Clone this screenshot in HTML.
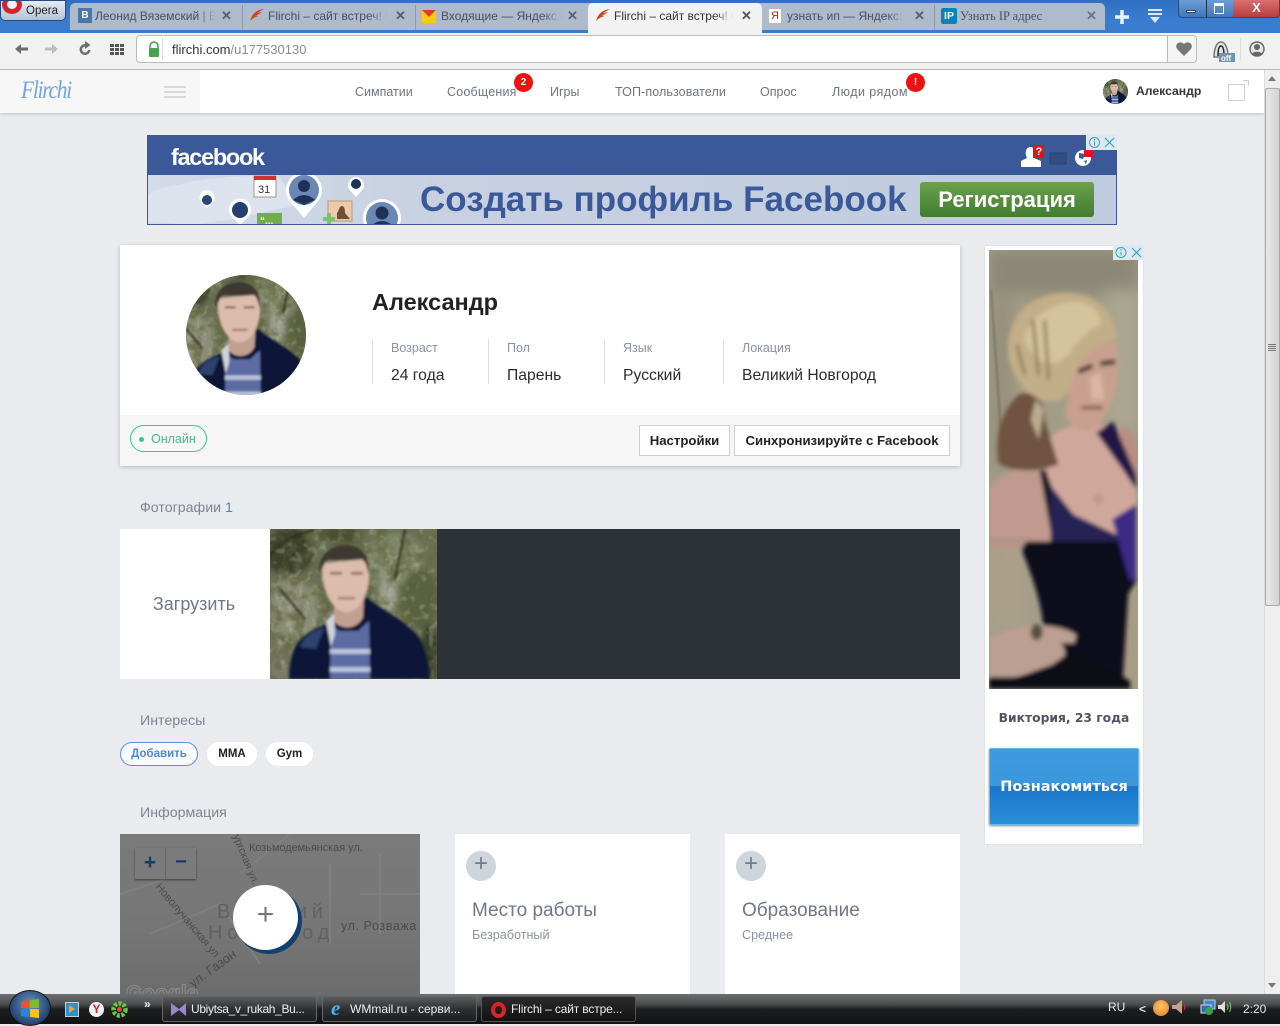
<!DOCTYPE html>
<html lang="ru"><head><meta charset="utf-8"><title>Flirchi</title>
<style>
*{box-sizing:border-box}
html,body{margin:0;padding:0;width:1280px;height:1024px;overflow:hidden;background:#e9ebee;font-family:"Liberation Sans","Noto Sans CJK SC",sans-serif}
.a{position:absolute;white-space:nowrap}
.tt{position:absolute;top:8px;height:16px;font-size:12px;line-height:16px;color:#46505e;white-space:nowrap;overflow:hidden;-webkit-mask-image:linear-gradient(90deg,#000 82%,transparent 98%)}
.tx{position:absolute;top:7px;font-size:13px;font-weight:bold;line-height:18px;color:#56616f}
.nav{position:absolute;top:85px;font-size:12.5px;line-height:15px;color:#6d7582;white-space:nowrap}
.badge{position:absolute;width:19px;height:19px;border-radius:50%;background:#ee1111;color:#fff;font-size:10px;font-weight:bold;text-align:center;line-height:19px}
.lbl{position:absolute;top:340px;font-size:12.5px;line-height:15px;color:#8a93a3;white-space:nowrap;transform:translateY(1px)}
.val{position:absolute;top:367px;font-size:15.7px;line-height:18px;color:#2a2c30;white-space:nowrap}
.sep{position:absolute;top:339px;width:1px;height:45px;background:#ddd}
.btn{position:absolute;top:425px;height:31px;background:#fff;border:1px solid #cfcfcf;font-size:13.2px;font-weight:bold;color:#222;text-align:center;line-height:30px;white-space:nowrap}
.h{position:absolute;left:140px;font-size:14.2px;line-height:16px;color:#7d8593;white-space:nowrap}
.pill{position:absolute;top:742px;height:24px;border-radius:12px;background:#fff;font-size:11.5px;font-weight:bold;text-align:center;line-height:25px;color:#222}
.card{position:absolute;top:834px;height:160px;background:#fff}
.plus{position:absolute;width:30px;height:30px;border-radius:50%;background:#cfd5dd;color:#737c8a;text-align:center;font-size:24px;line-height:26px;left:11px;top:17px}
.ct{position:absolute;top:66px;font-size:19px;line-height:22px;color:#6f7888;white-space:nowrap}
.cs{position:absolute;top:94px;font-size:12.6px;line-height:15px;color:#8a93a3;white-space:nowrap}
.tb{position:absolute;top:996px;height:26px;border:1px solid #666;border-radius:3px;background:linear-gradient(#5a5c5e,#2e3032 50%,#1c1e20);color:#eee;font-size:12px;line-height:24px;white-space:nowrap;overflow:hidden}
</style></head><body>

<svg width="0" height="0" style="position:absolute"><defs>
<filter id="b1"><feGaussianBlur stdDeviation="1.200"/></filter>
<filter id="b2"><feGaussianBlur stdDeviation="2.200"/></filter>
<filter id="b3"><feGaussianBlur stdDeviation="3"/></filter>
<filter id="b5"><feGaussianBlur stdDeviation="7"/></filter>
<filter id="leaf" x="0" y="0" width="100%" height="100%"><feTurbulence type="fractalNoise" baseFrequency=".085" numOctaves="3" seed="4"/><feColorMatrix values="0 0 0 0 .12  0 0 0 0 .13  0 0 0 0 .05  3 0 0 0 -1.2"/></filter>
<filter id="leaf2" x="0" y="0" width="100%" height="100%"><feTurbulence type="fractalNoise" baseFrequency=".12" numOctaves="2" seed="9"/><feColorMatrix values="0 0 0 0 .8  0 0 0 0 .82  0 0 0 0 .72  3 0 0 0 -1.6"/></filter>
<symbol id="man" viewBox="0 0 167 150" preserveAspectRatio="xMidYMid slice">
<rect width="167" height="150" fill="#6a7053"/>
<g filter="url(#b3)">
<ellipse cx="18" cy="22" rx="26" ry="24" fill="#3c4129"/>
<ellipse cx="25" cy="80" rx="26" ry="30" fill="#8b8e77"/>
<ellipse cx="125" cy="30" rx="30" ry="26" fill="#7f8666"/>
<ellipse cx="150" cy="70" rx="18" ry="30" fill="#59613f"/>
<ellipse cx="118" cy="65" rx="10" ry="18" fill="#9a9e8b"/>
<ellipse cx="70" cy="6" rx="22" ry="9" fill="#4a5030"/>
<ellipse cx="10" cy="130" rx="16" ry="22" fill="#7c7a66"/>
<ellipse cx="160" cy="125" rx="10" ry="30" fill="#39402a"/>
</g>
<rect width="167" height="150" filter="url(#leaf)" opacity=".7"/>
<rect width="167" height="150" filter="url(#leaf2)" opacity=".3"/>
<path d="M0 25C20 5 35 5 45 0M10 60L35 90M135 0L125 50" stroke="#2e2a1e" stroke-width="2" fill="none" filter="url(#b1)"/>
<g filter="url(#b1)">
<path d="M19 150 C20 118 28 105 60 94 L76 84 L97 68 C105 78 140 92 152 113 C158 130 160 140 160 150Z" fill="#0d1739"/>
<path d="M60 150 L61 96 L70 102 L88 102 L99 92 L100 150Z" fill="#5b6ca3"/>
<path d="M60 120 H100 V125 H60ZM60 138 H100 V143 H60Z" fill="#b9c3dc"/>
<path d="M56 92 L64 84 L65 105 L61 118Z" fill="#cfd4dc"/>
<path d="M30 118 C34 108 42 102 54 99 L46 120Z" fill="#2f4270"/>
<path d="M64 70 L64 92 C72 102 88 100 93 88 L94 66Z" fill="#c2a090"/>
<path d="M52 34 C51 60 60 79 74 83 C85 85 95 72 98 58 C100 48 100 38 98 30Z" fill="#dcbcac"/>
<path d="M50 46 C47 26 60 16 76 16 C92 16 101 28 99 46 C97 38 96 32 91 30 C80 32 66 31 58 30 C54 34 52 40 50 46Z" fill="#3c3733"/>
<path d="M60 43 H72 V45.500 H60ZM81 43 H93 V45.500 H81Z" fill="#86655a"/>
<path d="M68 68 H85 V70.500 H68Z" fill="#a8766e"/>
</g>
</symbol>
<symbol id="woman" viewBox="0 0 150 440" preserveAspectRatio="none">
<rect width="150" height="440" fill="#a39d88"/>
<g filter="url(#b5)">
<rect x="0" y="0" width="150" height="45" fill="#8d8876"/>
<rect x="118" y="40" width="32" height="140" fill="#aba691"/>
<rect x="0" y="50" width="25" height="170" fill="#97917c"/>
<rect x="0" y="290" width="35" height="90" fill="#aaa08a"/>
<rect x="130" y="330" width="20" height="110" fill="#a89d84"/>
</g>
<path d="M2 40 L14 210" stroke="#5c5748" stroke-width="1" filter="url(#b1)"/>
<g filter="url(#b2)">
<path d="M134 175 C145 180 150 195 150 215 V230 L128 200Z" fill="#b98f83"/>
<path d="M60 190 C80 170 110 172 125 180 L148 230 V290 L100 290 L55 230Z" fill="#d0a89b"/>
<path d="M0 240 C15 218 42 215 60 228 L80 290 L80 300 H0Z" fill="#c09a8e"/>
<path d="M10 214 C5 190 12 160 30 145 C42 140 58 150 56 170 L70 215 C50 222 28 224 10 214Z" fill="#6f523f"/>
<path d="M42 170 L47 150 L55 160 L50 190Z" fill="#b9ae92"/>
<path d="M20 110 C14 70 40 42 80 43 C110 44 128 65 128 88 L112 95 C100 115 92 135 72 150 C60 155 32 150 20 110Z" fill="#c2ae88"/>
<path d="M35 90 C40 70 60 52 90 52 C105 55 115 65 112 75 C100 80 90 90 80 105 C65 118 50 120 35 90Z" fill="#d5c39c"/>
<path d="M28 95 L36 125 M44 70 L50 125 M56 70 L60 130" stroke="#8d7a58" stroke-width="3" fill="none"/>
<path d="M82 138 C88 108 105 92 128 92 C134 120 128 155 108 178 C98 186 84 180 76 165Z" fill="#c9a08f"/>
<path d="M90 122 L104 116 M112 114 L127 112" stroke="#42342f" stroke-width="5"/>
<path d="M93 158 H114" stroke="#6d4640" stroke-width="3"/>
<path d="M102 128 L112 122 L116 150 L103 150Z" fill="#dbb5a5"/>
<path d="M108 183 L125 172 L148 225 V240 L136 222Z" fill="#221945"/>
<path d="M51 222 L57 220 L82 290 L64 292Z" fill="#1c1626"/>
<path d="M62 236 L85 265 L134 288 L148 265 V300 H62Z" fill="#272054"/>
<path d="M30 292 L148 292 V332 L140 345 L134 440 H40 L55 380 C52 345 40 320 30 292Z" fill="#100a1c"/>
<path d="M124 270 L148 255 V330 L142 332Z" fill="#3c2c86"/>
<path d="M0 288 H40 L34 298 H0Z" fill="#b4948a"/>
<path d="M0 388 C15 382 28 378 42 376 C58 376 78 378 88 386 L86 394 L72 394 C78 400 78 408 72 412 C58 418 40 424 24 428 H0Z" fill="#bc9f93"/>
<ellipse cx="48" cy="383" rx="6" ry="8" fill="#55503f"/>
<path d="M0 428 H28 L60 418 L86 400 L142 432 V440 H0Z" fill="#0f0a16"/>
<circle cx="110" cy="250" r="3.500" fill="none" stroke="#7d7468"/>
</g>
</symbol>
</defs></svg>

<!-- page header -->
<div class="a" style="left:0;top:70px;width:1264px;height:43px;background:#fff;box-shadow:0 1px 3px rgba(0,0,0,.18)"></div>
<div class="a" style="left:0;top:70px;width:200px;height:43px;background:#f7f7f7"></div>
<div class="a" style="left:21px;top:78px;font-family:'Liberation Serif',serif;font-style:italic;font-size:25px;line-height:26px;letter-spacing:-1.500px;color:#76a3e2;transform:scaleX(.86);transform-origin:0 0">Flirchi</div>
<div class="a" style="left:164px;top:86px;width:22px;height:2px;background:#d8d8d8"></div>
<div class="a" style="left:164px;top:91px;width:22px;height:2px;background:#d8d8d8"></div>
<div class="a" style="left:164px;top:96px;width:22px;height:2px;background:#d8d8d8"></div>
<div class="nav" style="left:355px">Симпатии</div>
<div class="nav" style="left:447px;letter-spacing:.2px">Сообщения</div>
<div class="badge" style="left:514px;top:73px">2</div>
<div class="nav" style="left:550px">Игры</div>
<div class="nav" style="left:615px;letter-spacing:.1px">ТОП-пользователи</div>
<div class="nav" style="left:760px">Опрос</div>
<div class="nav" style="left:832px;letter-spacing:.45px">Люди рядом</div>
<div class="badge" style="left:906px;top:73px">!</div>
<svg class="a" style="left:1103px;top:79px;border-radius:50%" width="25" height="25"><use href="#man" width="25" height="25"/></svg>
<div class="a" style="left:1136px;top:84px;font-size:12.200px;font-weight:bold;line-height:15px;color:#33363b">Александр</div>
<svg class="a" style="left:1228px;top:80px" width="22" height="21" fill="none" stroke="#d0d0d0"><path d="M.5 4.500H16.500V20.500H.5ZM15 .5H20.500V6"/></svg>

<!-- fb banner -->
<div class="a" style="left:147px;top:135px;width:970px;height:90px;border:1px solid #3b5998;border-top:0;background:linear-gradient(90deg,#d3dbe8,#c8d1e2 30%,#bfcbdf);overflow:hidden">
<div class="a" style="left:-1px;top:0;width:970px;height:40px;background:#3b5998"></div>
<div class="a" style="left:23px;top:8px;font-size:23.500px;font-weight:bold;line-height:28px;letter-spacing:-1.300px;color:#fff">facebook</div>
<div class="a" style="left:272px;top:45px;font-size:35px;font-weight:bold;line-height:40px;color:#3b5998">Создать профиль Facebook</div>
<div class="a" style="left:772px;top:47px;width:174px;height:35px;border-radius:3px;background:linear-gradient(#6da14d,#3f7e2f);color:#fff;font-size:22px;font-weight:bold;line-height:35px;text-align:center">Регистрация</div>
<svg class="a" style="left:0;top:40px" width="270" height="50">
<path d="M0 20C12 10 30 12 45 6 L80 2 L130 0 L150 30 L80 45 L40 50 L0 46Z" fill="#dde3ed"/>
<path d="M59 33L54 28A7.500 7.500 0 1 1 64 28Z" fill="#fff"/><circle cx="59" cy="25" r="5" fill="#2b4677"/>
<path d="M92 50L84 42A11 11 0 1 1 100 42Z" fill="#fff"/><circle cx="92" cy="35" r="8" fill="#24406f"/>
<rect x="106" y="1" width="22" height="21" fill="#fff" stroke="#998"/><rect x="106" y="1" width="22" height="4" fill="#c33"/><text x="110" y="18" font-size="11" font-family="Liberation Sans" fill="#333">31</text>
<path d="M156 43L141 25A18 18 0 1 1 171 25Z" fill="#fff"/><circle cx="156" cy="15" r="15" fill="#6a87b6"/><circle cx="156" cy="11" r="6" fill="#1f3158"/><path d="M145 25Q156 15 167 25L156 30Z" fill="#1f3158"/>
<path d="M208 22L201 14A8 8 0 1 1 215 14Z" fill="#fff"/><circle cx="208" cy="9" r="5" fill="#1f3158"/>
<rect x="180" y="26" width="24" height="20" fill="#f0c9a8" stroke="#b59b77"/><path d="M189 44V38C191 36 191 31 194 31S197 36 197 38L202 44Z" fill="#6b5236"/>
<circle cx="234" cy="43" r="19" fill="#fff"/><circle cx="234" cy="43" r="16" fill="#6a87b6"/><circle cx="234" cy="38" r="6.500" fill="#1f3158"/><path d="M224 50Q234 42 244 50Z" fill="#1f3158"/>
<rect x="109" y="38" width="25" height="14" fill="#6fae4a"/><text x="112" y="49" font-size="10" fill="#fff" font-family="Liberation Sans" font-weight="bold">“...</text>
<path d="M179 38h4v4h4v4h-4v4h-4v-4h-4v-4h4Z" fill="#7fc168"/>
</svg>
<svg class="a" style="left:870px;top:7px" width="90" height="30">
<path d="M3 25V19L9 16C7 12 7 6 12 5 18 5 18 12 16 16L23 19V25Z" fill="#fff"/><rect x="15" y="3" width="11" height="13" fill="#e0141b"/><text x="17.500" y="13" font-size="11" font-weight="bold" fill="#fff" font-family="Liberation Sans">?</text>
<rect x="32" y="11" width="16" height="11" fill="#324d80" stroke="#2a4270"/>
<circle cx="65" cy="16" r="8" fill="#fff"/><path d="M61 11l6 1-2 5-4-1ZM66 19l3-1-1 4Z" fill="#3b5998"/><rect x="66" y="8" width="9" height="7" fill="#e0141b"/>
</svg>
</div>
<div class="a" style="left:1086px;top:135px;width:31px;height:15px;background:#dfe8ee"></div>
<svg class="a" style="left:1087px;top:135px" width="30" height="15" fill="none" stroke="#2aa6c4"><circle cx="7.500" cy="7.500" r="5"/><path d="M7.500 6.500V10.500M7.500 4V5.500"/><path d="M18 3L27 12M27 3L18 12" stroke-width="1.200"/></svg>

<!-- profile card -->
<div class="a" style="left:120px;top:245px;width:840px;height:221px;background:#fff;box-shadow:0 1px 4px rgba(0,0,0,.22)"></div>
<div class="a" style="left:120px;top:415px;width:840px;height:51px;background:#f6f6f6"></div>
<svg class="a" style="left:186px;top:275px;border-radius:50%" width="120" height="120"><use href="#man" x="-15" y="0" width="150" height="120"/></svg>
<div class="a" style="left:372px;top:289px;font-size:23.500px;font-weight:bold;line-height:26px;color:#222">Александр</div>
<div class="sep" style="left:372px"></div><div class="sep" style="left:488px"></div><div class="sep" style="left:604px"></div><div class="sep" style="left:723px"></div>
<div class="lbl" style="left:391px">Возраст</div><div class="val" style="left:391px">24 года</div>
<div class="lbl" style="left:507px">Пол</div><div class="val" style="left:507px">Парень</div>
<div class="lbl" style="left:623px">Язык</div><div class="val" style="left:623px">Русский</div>
<div class="lbl" style="left:742px">Локация</div><div class="val" style="left:742px">Великий Новгород</div>
<div class="a" style="left:130px;top:425px;width:77px;height:27px;border:1px solid #2fcb8d;border-radius:14px;font-size:12.500px;line-height:26px;color:#3ec08d;padding-left:20px">Онлайн<span style="position:absolute;left:8px;top:11px;width:5px;height:5px;border-radius:50%;background:#2fcb8d"></span></div>
<div class="btn" style="left:639px;width:91px">Настройки</div>
<div class="btn" style="left:734px;width:216px">Синхронизируйте с Facebook</div>

<!-- photos -->
<div class="h" style="top:500px">Фотографии <span style="color:#4a80c8">1</span></div>
<div class="a" style="left:120px;top:529px;width:840px;height:150px;background:#2d3138"></div>
<div class="a" style="left:120px;top:529px;width:150px;height:150px;background:#fff;font-size:18px;line-height:150px;text-align:center;color:#6f7888;padding-right:2px">Загрузить</div>
<svg class="a" style="left:270px;top:529px" width="167" height="150"><use href="#man" width="167" height="150"/></svg>

<!-- interests -->
<div class="h" style="top:713px">Интересы</div>
<div class="pill" style="left:120px;width:78px;background:#f8fafd;border:1px solid #5d8fe0;color:#4f86e0;line-height:23px">Добавить</div>
<div class="pill" style="left:207px;width:50px">MMA</div>
<div class="pill" style="left:266px;width:47px">Gym</div>

<!-- info -->
<div class="h" style="top:805px">Информация</div>
<div class="a" style="left:120px;top:834px;width:300px;height:160px;background:linear-gradient(#7a7a7a 0,#767676 60%,#6c6c6c);overflow:hidden">
<svg class="a" style="left:0;top:0" width="300" height="160" font-family="Liberation Sans" fill="#4c4c4c">
<path d="M30 100L100 70 140 130M170 0L120 40M210 30V110M240 60H300M260 20V100M0 60L60 40" stroke="#7f7f7f" stroke-width="2" fill="none"/>
<text x="129" y="17" font-size="10.900">Козьмодемьянская ул.</text>
<text x="0" y="0" font-size="10.500" transform="translate(113,2) rotate(68)">ургская ул.</text>
<text x="0" y="0" font-size="11" transform="translate(35,53) rotate(50)">Новолучанская ул</text>
<text x="0" y="0" font-size="13" transform="translate(73,154) rotate(-36)">ул. Газон</text>
<text x="221" y="96" font-size="12.500" letter-spacing=".6">ул. Розважа</text>
<text x="97" y="84" font-size="20" letter-spacing="4.700" fill="#616161">Великий</text>
<text x="88" y="105" font-size="20" letter-spacing="4.800" fill="#616161">Новгород</text>
<text x="6" y="166" font-size="21" font-weight="bold" fill="none" stroke="#8a8a8a">Google</text>
</svg>
<div class="a" style="left:15px;top:14px;width:61px;height:31px;background:#7b7b7b;box-shadow:0 1px 2px rgba(0,0,0,.5)"><span class="a" style="left:30px;top:0;width:1px;height:31px;background:#666"></span><span class="a" style="left:0;top:0;width:30px;text-align:center;font-size:21px;line-height:30px;font-weight:bold;color:#173a66">+</span><span class="a" style="left:31px;top:0;width:30px;text-align:center;font-size:20px;line-height:28px;font-weight:bold;color:#173a66">−</span></div>
<div class="a" style="left:116px;top:54px;width:66px;height:66px;border-radius:50%;background:#123e70"></div>
<div class="a" style="left:113px;top:51px;width:65px;height:65px;border-radius:50%;background:#fff;text-align:center;font-size:30px;line-height:60px;color:#777">+</div>
</div>
<div class="card" style="left:455px;width:235px"><div class="plus">+</div><div class="ct" style="left:17px">Место работы</div><div class="cs" style="left:17px">Безработный</div></div>
<div class="card" style="left:725px;width:235px"><div class="plus">+</div><div class="ct" style="left:17px">Образование</div><div class="cs" style="left:17px">Среднее</div></div>

<!-- ad -->
<div class="a" style="left:985px;top:246px;width:158px;height:598px;background:#fff;box-shadow:0 0 1px rgba(0,0,0,.2)"></div>
<svg class="a" style="left:989px;top:250px" width="149" height="439"><use href="#woman" width="149" height="439"/></svg>
<div class="a" style="left:985px;top:710px;width:158px;text-align:center;font-family:'DejaVu Sans',sans-serif;font-size:12.300px;font-weight:bold;line-height:16px;color:#4d5563">Виктория, 23 года</div>
<div class="a" style="left:989px;top:748px;width:150px;height:77px;border:1px solid #6cb8e8;border-radius:2px;background:linear-gradient(#3f9ade 0,#3b97dc 49%,#1b75cb 50%,#2a8fd8 100%);box-shadow:0 1px 2px rgba(0,0,0,.5);font-family:'DejaVu Sans',sans-serif;font-size:14.500px;font-weight:bold;color:#fff;text-align:center;line-height:77px">Познакомиться</div>
<div class="a" style="left:1113px;top:245px;width:31px;height:15px;background:#dfe8ee"></div>
<svg class="a" style="left:1113px;top:245px" width="31" height="15" fill="none" stroke="#2aa6c4"><circle cx="8" cy="7.500" r="5"/><path d="M8 6.500V10.500M8 4V5.500"/><path d="M19 3L28 12M28 3L19 12" stroke-width="1.200"/></svg>

<!-- scrollbar -->
<div class="a" style="left:1264px;top:70px;width:16px;height:925px;background:#efefef;border-left:1px solid #ddd"></div>
<div class="a" style="left:1265px;top:88px;width:15px;height:518px;background:linear-gradient(90deg,#e8e8e8,#d4d4d4);border:1px solid #a8a8a8;border-radius:2px"></div>
<div class="a" style="left:1268px;top:344px;width:8px;height:7px;background:repeating-linear-gradient(#777 0 1px,transparent 1px 2px)"></div>
<div class="a" style="left:1268px;top:76px;border:4px solid transparent;border-top:0;border-bottom:5px solid #777"></div>
<div class="a" style="left:1268px;top:983px;border:4px solid transparent;border-bottom:0;border-top:5px solid #777"></div>

<!-- tab strip -->
<div class="a" style="left:0;top:0;width:1280px;height:33px;background:linear-gradient(#2f6fc2,#3a7dd0 60%,#3a7ccc)"></div>
<div class="a" style="left:0;top:0;width:66px;height:21px;background:linear-gradient(#e4ebf4,#b4c3d6);border:1px solid #254a7c;border-radius:0 0 5px 5px;font-size:11.500px;line-height:21px;color:#222;padding-left:25px;overflow:hidden">Opera<span style="position:absolute;left:1px;top:-6px;width:20px;height:19px;border-radius:50%;border:5px solid #d3232d;background:#eef2f7"></span></div>

<div class="a" style="left:70px;top:3px;width:1035px;height:27px;background:#aebbcd;border-radius:5px 5px 0 0"></div>
<div class="a" style="left:242px;top:5px;width:1px;height:25px;background:#8c9aae"></div>
<div class="a" style="left:415px;top:5px;width:1px;height:25px;background:#8c9aae"></div>
<div class="a" style="left:934px;top:5px;width:1px;height:25px;background:#8c9aae"></div>
<div class="a" style="left:588px;top:3px;width:174px;height:31px;background:#f2f2f2;border-radius:5px 5px 0 0"></div>

<div class="a" style="left:78px;top:8px;width:14px;height:15px;background:#4a76a8;color:#fff;font-size:10px;font-weight:bold;line-height:15px;text-align:center">B</div>
<div class="tt" style="left:95px;width:124px">Леонид Вяземский | В</div>
<div class="tx" style="left:221px">✕</div>
<svg class="a" style="left:249px;top:8px" width="16" height="14"><path d="M1 13C3 6 7 2 15 1L8 5 13 4 7 8 10 8C6 9 4 10 1 13Z" fill="#d0451b"/></svg>
<div class="tt" style="left:268px;width:122px">Flirchi – сайт встреч! С</div>
<div class="tx" style="left:395px">✕</div>
<div class="a" style="left:422px;top:10px;width:14px;height:13px;background:#fc0"></div>
<div class="a" style="left:422px;top:10px;border:7px solid transparent;border-top:7px solid #e33b1e;border-bottom:0"></div>
<div class="tt" style="left:441px;width:124px">Входящие — Яндекс.Почта</div>
<div class="tx" style="left:567px">✕</div>
<svg class="a" style="left:595px;top:8px" width="16" height="14"><path d="M1 13C3 6 7 2 15 1L8 5 13 4 7 8 10 8C6 9 4 10 1 13Z" fill="#d0451b"/></svg>
<div class="tt" style="left:614px;width:122px;color:#333">Flirchi – сайт встреч! С</div>
<div class="tx" style="left:741px;color:#555">✕</div>
<div class="a" style="left:768px;top:8px;width:14px;height:16px;background:#fff;border:1px solid #bbb;border-radius:2px;color:#c5201f;font-size:11px;line-height:14px;text-align:center">Я</div>
<div class="tt" style="left:787px;width:122px">узнать ип — Яндекс: нашлось</div>
<div class="tx" style="left:914px">✕</div>
<div class="a" style="left:941px;top:8px;width:16px;height:16px;background:#0a84b8;border-radius:2px;color:#fff;font-size:10.500px;font-weight:bold;line-height:16px;text-align:center">IP</div>
<div class="a" style="left:960px;top:8px;font-family:'Liberation Serif',serif;font-size:12.500px;line-height:16px;color:#46505e">Узнать IP адрес</div>
<div class="tx" style="left:1086px;color:#6a7482">✕</div>

<svg class="a" style="left:1114px;top:8px" width="16" height="18"><path d="M8 2V16M1 9H15" stroke="#e6f0fb" stroke-width="3.500"/></svg>
<svg class="a" style="left:1147px;top:8px" width="16" height="16"><path d="M1 2H15M1 6H15" stroke="#dce8f6" stroke-width="2"/><path d="M3 9H13L8 15Z" fill="#dce8f6"/></svg>
<div class="a" style="left:1178px;top:0;width:102px;height:18px;background:linear-gradient(#6b9dd6,#3e78bd);border:1px solid #254a7c;border-top:0;border-radius:0 0 4px 4px;overflow:hidden">
<div class="a" style="left:27px;top:0;width:1px;height:18px;background:#234"></div>
<div class="a" style="left:54px;top:0;width:47px;height:18px;background:linear-gradient(#d7706f,#b83a3a)"></div>
<div class="a" style="left:7px;top:10px;width:10px;height:3px;background:#fff;border:1px solid #345"></div>
<div class="a" style="left:35px;top:3px;width:10px;height:11px;border:1px solid #fff;box-shadow:inset 0 2px #fff"></div>
<div class="a" style="left:54px;top:0;width:47px;text-align:center;font-size:13px;font-weight:bold;line-height:16px;color:#fff">X</div>
</div>

<!-- toolbar -->
<div class="a" style="left:0;top:33px;width:1280px;height:37px;background:#f1f1f1;border-bottom:1px solid #b5b5b5"></div>
<div class="a" style="left:588px;top:29px;width:174px;height:5px;background:#f2f2f2"></div>
<svg class="a" style="left:12px;top:41px" width="115" height="16" fill="#6d6d6d"><path d="M3 8L9 3V6.500H16V9.500H9V13Z"/><path d="M46 8L40 3V6.500H33V9.500H40V13Z" fill="#bdbdbd"/><path d="M73 3A5.500 5.500 0 1 0 78.500 9H76A3 3 0 1 1 73 5.500V8L78.500 4 73 0Z"/><path d="M98 3h4v3h-4zM103 3h4v3h-4zM108 3h4v3h-4zM98 7h4v3h-4zM103 7h4v3h-4zM108 7h4v3h-4zM98 11h4v3h-4zM103 11h4v3h-4zM108 11h4v3h-4z" fill="#555"/></svg>
<div class="a" style="left:136px;top:35px;width:1032px;height:28px;background:#fff;border:1px solid #bcbcbc;border-radius:4px 0 0 4px"></div>
<div class="a" style="left:1167px;top:35px;width:30px;height:28px;background:#f5f5f5;border:1px solid #bcbcbc;border-radius:0 4px 4px 0"></div>
<svg class="a" style="left:147px;top:41px" width="14" height="16"><path d="M3 7V5A4 4 0 0 1 11 5V7" fill="none" stroke="#46a34a" stroke-width="1.500"/><rect x="2" y="7" width="10" height="9" rx="1" fill="#46a34a"/></svg>
<div class="a" style="left:162px;top:38px;width:1px;height:22px;background:#ddd"></div>
<div class="a" style="left:172px;top:42px;font-size:13px;line-height:15px;color:#333">flirchi.com<span style="color:#8d8d8d">/u177530130</span></div>
<svg class="a" style="left:1175px;top:41px" width="18" height="16"><path d="M9 15L2 8C-1 3 5-1 9 3 13-1 19 3 16 8Z" fill="#777"/></svg>
<svg class="a" style="left:1212px;top:40px" width="24" height="24"><path d="M2 17C2 8 5 2 9 2S16 8 16 17Z" fill="#e4e4e4" stroke="#777" stroke-width="1.500"/><path d="M6 16C6 9 7 6 9 6S12 9 12 16" fill="none" stroke="#222" stroke-width="1.500"/><rect x="7" y="13" width="16" height="9" fill="#6f94ad"/><text x="9" y="21" font-size="8" font-weight="bold" fill="#fff" font-family="Liberation Sans">off</text></svg>
<div class="a" style="left:1240px;top:38px;width:1px;height:22px;background:#ddd"></div>
<svg class="a" style="left:1249px;top:41px" width="16" height="17"><circle cx="8" cy="8" r="7" fill="#e6e6e6" stroke="#666" stroke-width="1.400"/><circle cx="8" cy="6" r="3" fill="#666"/><path d="M3 13C4 10 12 10 13 13L8 15Z" fill="#666"/></svg>

<!-- taskbar -->
<div class="a" style="left:0;top:994px;width:1280px;height:30px;background:linear-gradient(#6c6e70 0,#4a4c4e 35%,#1c1e20 50%,#101214)"></div>
<div class="a" style="left:9px;top:990px;width:42px;height:36px;border-radius:50%;background:radial-gradient(circle at 50% 40%,#6b93c4,#22426b 72%);border:1px solid #111"></div>
<svg class="a" style="left:20px;top:999px" width="20" height="20"><path d="M1 3L9 1V9H1Z" fill="#e8542b"/><path d="M10 1L19 0V9H10Z" fill="#7db93a"/><path d="M1 10H9V18L1 17Z" fill="#2c84d6"/><path d="M10 10H19V19L10 18Z" fill="#f7c327"/></svg>
<div class="a" style="left:65px;top:1002px;width:14px;height:15px;background:#2b8fd0;border:1px solid #ccc"></div>
<div class="a" style="left:69px;top:1005px;border:4px solid transparent;border-left:6px solid #f6a21a;border-right:0"></div>
<div class="a" style="left:89px;top:1002px;width:15px;height:15px;border-radius:50%;background:#f5f5f5;color:#d1232a;font-size:12px;font-weight:bold;line-height:15px;text-align:center">Y</div>
<svg class="a" style="left:111px;top:1001px" width="17" height="17"><circle cx="8.500" cy="8.500" r="6" fill="none" stroke="#66c93b" stroke-width="4.500" stroke-dasharray="3 1.500"/><circle cx="8.500" cy="8.500" r="2.500" fill="#e43"/></svg>
<div class="a" style="left:144px;top:997px;color:#eee;font-size:12px;line-height:14px;font-weight:bold">»</div>
<div class="tb" style="left:162px;width:155px;padding-left:28px;letter-spacing:-.35px">Ubiytsa_v_rukah_Bu...</div>
<svg class="a" style="left:171px;top:1002px" width="16" height="15"><path d="M0 1L8 7 15 1V14L8 8 0 14Z" fill="#9a86c9"/></svg>
<div class="tb" style="left:322px;width:155px;padding-left:27px">WMmail.ru - серви...</div>
<div class="a" style="left:331px;top:1001px;width:15px;height:16px;color:#49b6ef;font-family:'Liberation Serif',serif;font-size:21px;font-weight:bold;line-height:15px;font-style:italic">e</div>
<div class="tb" style="left:481px;width:155px;padding-left:29px;background:linear-gradient(#2b2b2b,#111);border-color:#555;letter-spacing:-.15px">Flirchi – сайт встре...</div>
<div class="a" style="left:491px;top:1002px;width:15px;height:16px;border-radius:50%;border:4px solid #d92328"></div>
<div class="a" style="left:1108px;top:1000px;color:#e6e6e6;font-size:12px;line-height:14px">RU</div>
<div class="a" style="left:1139px;top:1002px;color:#ddd;font-size:12px;line-height:14px;font-weight:bold">&lt;</div>
<div class="a" style="left:1153px;top:1000px;width:16px;height:16px;border-radius:50%;background:radial-gradient(circle at 50% 40%,#ffc66a,#e27a18)"></div>
<svg class="a" style="left:1171px;top:999px" width="16" height="17"><path d="M1 6H5L11 1V15L5 10H1Z" fill="#c9a18a"/><path d="M13 5Q15 8 13 11" stroke="#d33" fill="none"/></svg>
<svg class="a" style="left:1200px;top:999px" width="16" height="18"><rect x="4" y="1" width="11" height="9" fill="#3f87d0" stroke="#ccc"/><rect x="1" y="6" width="10" height="8" fill="#2f6cb0" stroke="#ddd"/><circle cx="9" cy="12" r="4" fill="#36a24b"/></svg>
<svg class="a" style="left:1217px;top:1000px" width="16" height="15"><path d="M1 5H4L8 1V13L4 9H1Z" fill="#ddd"/><path d="M10 4Q12 7 10 10M12.500 2Q15 7 12.500 12" stroke="#7ccf6a" fill="none"/></svg>
<div class="a" style="left:1243px;top:1002px;color:#e6e6e6;font-size:12px;line-height:14px">2:20</div>
</body></html>
